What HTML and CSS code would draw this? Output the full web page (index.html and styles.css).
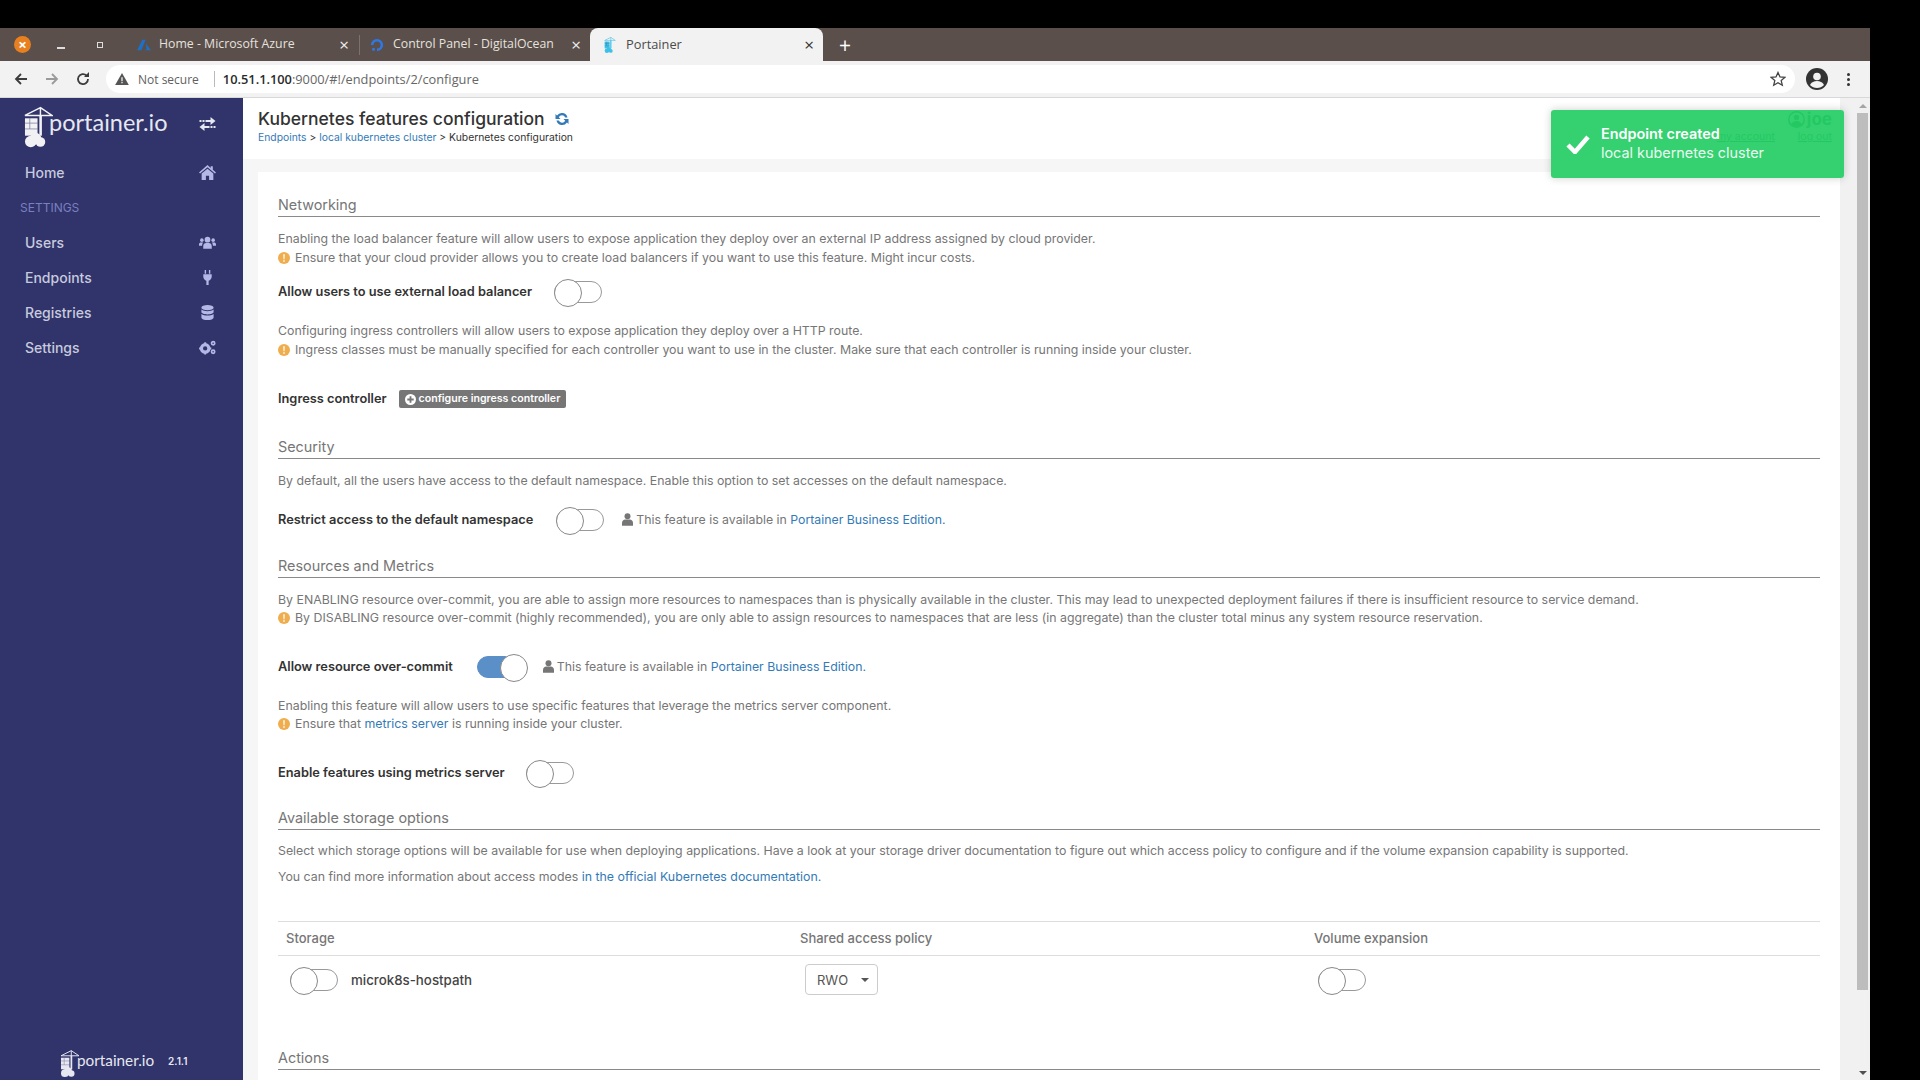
FILE: index.html
```html
<!DOCTYPE html>
<html lang="en">
<head>
<meta charset="utf-8">
<title>Portainer</title>
<link rel="stylesheet" href="styles.css">
</head>
<body>
<svg class="defs" width="0" height="0" aria-hidden="true">
  <defs>
    <symbol id="logo" viewBox="0 0 30 42">
      <path d="M17 1L1 9h28zM17 1v28" fill="none" stroke="currentColor" stroke-width="1.500"/>
      <path d="M16 9h2.500v21H16z" fill="currentColor"/>
      <path d="M1 12h13v18H1z" fill="currentColor"/>
      <path d="M1 17h13M1 23h13M6 12v11" stroke="#30346a" stroke-width=".8" opacity=".6"/>
      <circle cx="7" cy="36" r="6" fill="currentColor"/>
      <circle cx="12" cy="33" r="6" fill="currentColor"/>
      <circle cx="17" cy="36.500" r="5" fill="currentColor"/>
    </symbol>
    <symbol id="warn" viewBox="0 0 16 16">
      <circle cx="8" cy="8" r="8" fill="#f0ad4e"/>
      <path d="M7 3h2l-.3 6.500H7.300zM7 11h2v2H7z" fill="#fff"/>
    </symbol>
    <symbol id="user" viewBox="0 0 14 16">
      <circle cx="7" cy="4" r="3.800" fill="currentColor"/>
      <path d="M0 16v-3.500C0 9.500 2 8 4 8h6c2 0 4 1.500 4 4.500V16z" fill="currentColor"/>
    </symbol>
  </defs>
</svg>
<div class="window">
  <div class="tabbar">
    <span class="close-dot">×</span>
    <span class="win-min"></span>
    <span class="win-max"></span>
    <div class="tab tab-azure">
      <svg class="favicon" viewBox="0 0 16 16"><path d="M6 2h4L5 14H0zM10 6l6 8H7l4-1z" fill="#1f6fc4"/></svg>
      <span class="tab-title">Home - Microsoft Azure</span><span class="tab-x">×</span>
    </div>
    <span class="tab-sep"></span>
    <div class="tab tab-do">
      <svg class="favicon" viewBox="0 0 16 16"><path d="M8 15V12a4 4 0 1 0-4-4H1A7 7 0 1 1 8 15z" fill="#2f78e4"/><path d="M2.500 11.500h3v3h-3z" fill="#2f78e4"/></svg>
      <span class="tab-title">Control Panel - DigitalOcean</span><span class="tab-x">×</span>
    </div>
    <div class="tab tab-active">
      <svg class="favicon fav-logo"><use href="#logo"/></svg>
      <span class="tab-title">Portainer</span><span class="tab-x">×</span>
    </div>
    <span class="tab-new">+</span>
  </div>
  <div class="toolbar">
    <svg class="nav" viewBox="0 0 16 16"><path d="M14 8H3M8 3L3 8l5 5" fill="none" stroke="#3c3c3c" stroke-width="1.800"/></svg>
    <svg class="nav" viewBox="0 0 16 16"><path d="M2 8h11M8 3l5 5-5 5" fill="none" stroke="#9a9a9a" stroke-width="1.800"/></svg>
    <svg class="nav" viewBox="0 0 16 16"><path d="M13 8a5 5 0 1 1-1.500-3.500" fill="none" stroke="#3c3c3c" stroke-width="1.800"/><path d="M14 1v5H9z" fill="#3c3c3c"/></svg>
    <div class="omnibox">
      <svg class="warn-tri" viewBox="0 0 16 14"><path d="M8 0l8 14H0z" fill="#555"/><path d="M7.300 5h1.400v4.500H7.300zM7.300 10.500h1.400V12H7.300z" fill="#fff"/></svg>
      <span class="not-secure">Not secure</span>
      <span class="omni-sep"></span>
      <span class="url"><b>10.51.1.100</b>:9000/#!/endpoints/2/configure</span>
      <svg class="star" viewBox="0 0 16 16"><path d="M8 1.500l2 4.500 4.800.4-3.600 3.200 1.100 4.700L8 11.800l-4.300 2.500 1.100-4.700L1.200 6.400 6 6z" fill="none" stroke="#444" stroke-width="1.300"/></svg>
    </div>
    <svg class="avatar" viewBox="0 0 22 22"><circle cx="11" cy="11" r="11" fill="#333"/><circle cx="11" cy="8.500" r="3.800" fill="#f2f2f2"/><path d="M4 17c1.500-3 4-4 7-4s5.500 1 7 4c-1.800 2-4.300 3-7 3s-5.200-1-7-3z" fill="#f2f2f2"/></svg>
    <span class="kebab"><i></i><i></i><i></i></span>
  </div>
  <div class="app">
    <aside class="sidebar">
      <div class="brand">
        <svg class="brand-logo"><use href="#logo"/></svg>
        <span class="brand-name">portainer.io</span>
        <svg class="brand-swap" viewBox="0 0 16 14"><path d="M0 3h2v2H0zM3 3h2v2H3zM6 3h5V0l5 4-5 4V5H6zM16 9h-2v2h2zM13 9h-2v2h2zM10 9H5V6l-5 4 5 4v-3h5z" fill="currentColor"/></svg>
      </div>
      <nav class="menu">
        <a class="menu-item"><span>Home</span>
          <svg class="menu-icon" viewBox="0 0 16 14"><path d="M8 0L0 7l1 1 7-6 7 6 1-1-3-2.600V1h-2v1.700z" fill="currentColor"/><path d="M8 3.500L2.500 8v6H6.500v-4h3v4h4V8z" fill="currentColor"/></svg></a>
        <div class="menu-title">SETTINGS</div>
        <a class="menu-item"><span>Users</span>
          <svg class="menu-icon" viewBox="0 0 18 13"><circle cx="9" cy="3.500" r="3" fill="currentColor"/><circle cx="3" cy="4" r="1.900" fill="currentColor"/><circle cx="15" cy="4" r="1.900" fill="currentColor"/><path d="M4.500 13v-2.500C4.500 8 6 7 7.500 7h3c1.500 0 3 1 3 3.500V13zM0 10V8.500C0 7 1 6.500 2 6.500h2.500C3.500 7.500 3.300 8.800 3.300 10zM18 10V8.500C18 7 17 6.500 16 6.500h-2.500c1 1 1.200 2.300 1.200 3.500z" fill="currentColor"/></svg></a>
        <a class="menu-item"><span>Endpoints</span>
          <svg class="menu-icon" viewBox="0 0 16 16"><path d="M5 0h1.500v4H5zM9.500 0H11v4H9.500zM3.500 4.500h9V7c0 2.500-1.700 4-3.300 4.400V16H6.800v-4.600C5.200 11 3.500 9.500 3.500 7z" fill="currentColor"/></svg></a>
        <a class="menu-item"><span>Registries</span>
          <svg class="menu-icon" viewBox="0 0 14 16"><ellipse cx="7" cy="2.800" rx="6.500" ry="2.800" fill="currentColor"/><path d="M.5 4.800C2 6.200 4.500 6.600 7 6.600s5-.4 6.500-1.800v2.700C13.500 9 10.500 10 7 10S.5 9 .5 7.500zM.5 9.500C2 10.900 4.500 11.300 7 11.300s5-.4 6.500-1.800v3.700C13.500 14.800 10.500 16 7 16S.5 14.800.5 13.200z" fill="currentColor"/></svg></a>
        <a class="menu-item"><span>Settings</span>
          <svg class="menu-icon" viewBox="0 0 18 16"><circle cx="6.500" cy="9" r="4" fill="none" stroke="currentColor" stroke-width="3.400"/><path d="M5.500 2.500h2v2h-2zM5.500 13.500h2v2h-2zM0 8h2v2H0zM11 8h2v2h-2z" fill="currentColor"/><circle cx="15" cy="3.500" r="1.700" fill="none" stroke="currentColor" stroke-width="1.800"/><circle cx="15" cy="12.500" r="1.700" fill="none" stroke="currentColor" stroke-width="1.800"/></svg></a>
      </nav>
      <div class="sidebar-foot">
        <svg class="foot-logo"><use href="#logo"/></svg>
        <span class="foot-name">portainer.io</span>
        <span class="foot-ver">2.1.1</span>
      </div>
    </aside>
    <main class="main">
      <header class="page-header">
        <div>
          <h1 class="page-title">Kubernetes features configuration
            <svg class="refresh" viewBox="0 0 16 16"><path d="M13.500 6.500A5.800 5.800 0 0 0 3 4.500L1.500 3v5h5L4.800 6.300A3.500 3.500 0 0 1 11.200 6.500zM2.500 9.500A5.800 5.800 0 0 0 13 11.500l1.500 1.500V8h-5l1.700 1.700A3.500 3.500 0 0 1 4.800 9.500z" fill="#337ab7"/></svg>
          </h1>
          <div class="crumbs"><a>Endpoints</a> &gt; <a>local kubernetes cluster</a> &gt; Kubernetes configuration</div>
        </div>
        <div class="userbox">
          <div class="user-name"><svg class="user-ico" viewBox="0 0 22 22"><circle cx="11" cy="11" r="10" fill="none" stroke="currentColor" stroke-width="2"/><circle cx="11" cy="8.500" r="3.500" fill="currentColor"/><path d="M4 17c2-3 4-4 7-4s5 1 7 4c-2 2-4 3-7 3s-5-1-7-3z" fill="currentColor"/></svg> joe</div>
          <div class="user-links"><a>my account</a> <a>log out</a></div>
        </div>
      </header>
      <section class="card">
        <h2 class="sec sec-first">Networking</h2>
        <p class="txt">Enabling the load balancer feature will allow users to expose application they deploy over an external IP address assigned by cloud provider.</p>
        <p class="txt"><svg class="warn"><use href="#warn"/></svg>Ensure that your cloud provider allows you to create load balancers if you want to use this feature. Might incur costs.</p>
        <div class="row row-a"><label class="lbl">Allow users to use external load balancer</label><span class="switch"></span></div>
        <p class="txt txt-gap">Configuring ingress controllers will allow users to expose application they deploy over a HTTP route.</p>
        <p class="txt"><svg class="warn"><use href="#warn"/></svg>Ingress classes must be manually specified for each controller you want to use in the cluster. Make sure that each controller is running inside your cluster.</p>
        <div class="row row-b"><label class="lbl">Ingress controller</label>
          <span class="btn-mini"><svg class="plus" viewBox="0 0 12 12"><circle cx="6" cy="6" r="6" fill="#fff"/><path d="M5 2.500h2V5h2.500v2H7v2.500H5V7H2.500V5H5z" fill="#767676"/></svg>configure ingress controller</span></div>
        <h2 class="sec sec-security">Security</h2>
        <p class="txt">By default, all the users have access to the default namespace. Enable this option to set accesses on the default namespace.</p>
        <div class="row row-c"><label class="lbl">Restrict access to the default namespace</label><span class="switch"></span>
          <span class="be"><svg class="be-ico"><use href="#user"/></svg>This feature is available in <a>Portainer Business Edition.</a></span></div>
        <h2 class="sec sec-resources">Resources and Metrics</h2>
        <p class="txt">By ENABLING resource over-commit, you are able to assign more resources to namespaces than is physically available in the cluster. This may lead to unexpected deployment failures if there is insufficient resource to service demand.</p>
        <p class="txt"><svg class="warn"><use href="#warn"/></svg>By DISABLING resource over-commit (highly recommended), you are only able to assign resources to namespaces that are less (in aggregate) than the cluster total minus any system resource reservation.</p>
        <div class="row row-d"><label class="lbl">Allow resource over-commit</label><span class="switch on"></span>
          <span class="be"><svg class="be-ico"><use href="#user"/></svg>This feature is available in <a>Portainer Business Edition.</a></span></div>
        <p class="txt txt-gap2">Enabling this feature will allow users to use specific features that leverage the metrics server component.</p>
        <p class="txt"><svg class="warn"><use href="#warn"/></svg>Ensure that <a>metrics server</a> is running inside your cluster.</p>
        <div class="row row-e"><label class="lbl">Enable features using metrics server</label><span class="switch"></span></div>
        <h2 class="sec sec-storage">Available storage options</h2>
        <p class="txt txt-loose">Select which storage options will be available for use when deploying applications. Have a look at your storage driver documentation to figure out which access policy to configure and if the volume expansion capability is supported.</p>
        <p class="txt txt-loose">You can find more information about access modes <a>in the official Kubernetes documentation.</a></p>
        <div class="tbl">
          <div class="tbl-head"><span>Storage</span><span>Shared access policy</span><span>Volume expansion</span></div>
          <div class="tbl-row">
            <span class="tbl-cell"><span class="switch"></span><span class="store-name">microk8s-hostpath</span></span>
            <span class="tbl-cell"><span class="select">RWO<i class="caret"></i></span></span>
            <span class="tbl-cell"><span class="switch"></span></span>
          </div>
        </div>
        <h2 class="sec sec-actions">Actions</h2>
      </section>
    </main>
    <div class="scrollbar">
      <i class="sb-up"></i>
      <div class="sb-thumb"></div>
      <i class="sb-down"></i>
    </div>
    <div class="toast">
      <svg class="toast-check" viewBox="0 0 24 20"><path d="M2 11l7 7L22 3" fill="none" stroke="#fff" stroke-width="4.500"/></svg>
      <div class="toast-body"><div class="toast-title">Endpoint created</div><div>local kubernetes cluster</div></div>
    </div>
  </div>
</div>
</body>
</html>
```
FILE: styles.css
```css
* { box-sizing: border-box; }
html, body { margin: 0; height: 100%; background: #000; overflow: hidden; }
body { font-family: "Inter", "Open Sans", sans-serif; color: #333; }
.defs { position: absolute; }
.window { width: 1870px; height: 1052px; margin-top: 28px; display: flex; flex-direction: column; background: #fff; overflow: hidden; }

.tabbar { height: 33px; flex: none; background: #5a4f4b; display: flex; align-items: center; color: #eee; font: 12.300px "Open Sans", sans-serif; }
.close-dot { width: 17px; height: 17px; margin-left: 14px; border-radius: 50%; background: #e8801f; color: #fff; font: 700 15px/16px "Open Sans", sans-serif; text-align: center; flex: none; }
.win-min { width: 8px; height: 2px; background: #ddd; margin: 6px 0 0 26px; flex: none; }
.win-max { width: 6px; height: 6px; border: 1.500px solid #ddd; margin-left: 32px; flex: none; }
.tab { display: flex; align-items: center; height: 33px; flex: none; }
.favicon { width: 14px; height: 16px; flex: none; }
.tab-title { white-space: nowrap; color: #e6e2df; margin-top: -2px; }
.tab-x { font-size: 17px; line-height: 17px; color: #eee; margin-left: auto; margin-top: -1px; }
.tab-azure { width: 212px; margin-left: 34px; }
.tab-azure .tab-title { margin-left: 8px; }
.tab-sep { width: 1px; height: 20px; background: #7c726d; margin: 0 10px; flex: none; }
.tab-do { width: 211px; }
.tab-do .tab-title { margin-left: 9px; }
.tab-active { width: 233px; margin-left: 9px; background: #f2f2f2; border-radius: 8px 8px 0 0; padding: 0 9px 0 13px; }
.tab-active .tab-title { color: #4a4a4a; margin-left: 9px; font-size: 12.800px; }
.tab-active .tab-x { color: #333; }
.fav-logo { color: #3ec0e8; }
.tab-new { font-size: 21px; color: #fff; margin-left: 16px; line-height: 20px; }

.toolbar { height: 37px; flex: none; background: #f2f2f2; border-bottom: 1px solid #d8d8d8; display: flex; align-items: center; padding-left: 13px; }
.nav { width: 16px; height: 16px; margin-right: 15px; flex: none; }
.omnibox { flex: 1; height: 28px; background: #fff; border-radius: 14px; display: flex; align-items: center; padding: 0 9px; font: 12.800px "Open Sans", sans-serif; }
.warn-tri { width: 14px; height: 12px; margin-right: 9px; }
.not-secure { color: #5f5f5f; font-size: 12px; }
.omni-sep { width: 1px; height: 16px; background: #bbb; margin: 0 8px 0 15px; }
.url { color: #666; }
.url b { font-weight: 600; color: #2a2a2a; }
.star { width: 16px; height: 16px; margin-left: auto; }
.avatar { width: 22px; height: 22px; margin: 0 19px 0 11px; flex: none; }
.kebab { display: flex; flex-direction: column; gap: 2px; margin-right: 20px; }
.kebab i { width: 3px; height: 3px; border-radius: 50%; background: #333; }

.app { flex: 1; min-height: 0; display: flex; position: relative; }
.sidebar { width: 243px; flex: none; background: #30346a; display: flex; flex-direction: column; color: #b9bdde; }
.brand { height: 52px; display: flex; align-items: center; padding-left: 24px; color: #fff; }
.brand-logo { width: 29px; height: 42px; margin-top: 6px; color: #f2f2f5; flex: none; margin-right: -4px; }
.brand-name { font: 400 23.500px "Lato", sans-serif; margin-top: -4px; color: #e6e7f0; }
.brand-swap { width: 17px; height: 14px; margin-left: auto; margin-right: 27px; color: #e6e7f0; }
.menu { margin-top: 5px; }
.menu-item { display: flex; align-items: center; justify-content: space-between; height: 35px; padding: 0 27px 0 25px; font: 500 14px "Inter", sans-serif; color: #c8cade; }
.menu-icon { width: 17px; height: 15px; color: #b3b8e6; }
.menu-title { font: 400 12px/35px "Inter", sans-serif; color: #7a7fc0; padding-left: 20px; height: 35px; }
.sidebar-foot { margin-top: auto; height: 38px; display: flex; align-items: center; padding-left: 60px; color: #e6e7f0; }
.foot-logo { width: 20px; height: 27px; margin-top: 4px; flex: none; margin-right: -3px; }
.foot-name { font: 400 15.300px "Lato", sans-serif; margin-top: -2px; }
.foot-ver { font: 600 10px "Inter", sans-serif; margin-left: 14px; }

.main { flex: 1; min-width: 0; background: #f6f6f6; overflow: hidden; }
.page-header { height: 61px; background: #fff; padding: 10px 8px 0 15px; display: flex; justify-content: space-between; }
.page-title { margin: 0; font: 500 17.500px/22px "Inter", sans-serif; color: #333; display: flex; align-items: center; gap: 9px; }
.refresh { width: 16px; height: 16px; }
.crumbs { font: 400 10.350px/14px "Inter", sans-serif; color: #333; }
.crumbs a, .txt a, .be a { color: #337ab7; }
.userbox { text-align: right; color: #189a4b; padding-top: 1px; }
.user-name { font: 700 17px/20px "Inter", sans-serif; display: flex; align-items: center; gap: 2px; justify-content: flex-end; }
.user-ico { width: 17px; height: 17px; }
.user-links { font: 400 10.500px/14px "Inter", sans-serif; margin-top: 1px; }
.user-links a { text-decoration: underline; margin-left: 20px; }

.card { margin: 13px 0 0 15px; background: #fff; padding: 0 20px; height: 920px; }
.sec { margin: 0; font: 400 14.400px/18px "Inter", sans-serif; color: #767676; border-bottom: 1px solid #8a8a8a; padding-bottom: 2px; }
.sec-first { padding-top: 24px; }
.sec-security { margin-top: 29px; }
.sec-resources { margin-top: 23px; }
.sec-storage { margin-top: 22px; }
.sec-actions { margin-top: 45px; }
.txt { margin: 0; font: 400 12.350px/18.500px "Inter", sans-serif; color: #767676; display: flex; align-items: center; white-space: pre; }
.sec + .txt { margin-top: 13px; }
.warn { width: 12px; height: 12px; margin-right: 5px; flex: none; }
.row { display: flex; align-items: center; }
.lbl { font: 600 12.800px/18px "Inter", sans-serif; color: #333; }
.switch { width: 48px; height: 22px; margin-left: 22px; border: 1px solid #999; border-radius: 12px; background: #fff; position: relative; display: inline-block; flex: none; }
.switch::before { content: ""; position: absolute; left: -1px; top: -3px; width: 26px; height: 26px; border-radius: 50%; background: #fff; border: 1px solid #888; }
.switch.on { background: #5a8fc8; border-color: #5a8fc8; }
.switch.on::before { left: 22px; }
.row-a { margin-top: 12px; height: 26px; }
.txt-gap { margin-top: 17px; }
.txt-gap2 { margin-top: 16px; }
.row-b { margin-top: 30px; height: 20px; }
.btn-mini { margin-left: 12px; height: 18px; background: #767676; color: #fff; border-radius: 2px; font: 600 10.600px/18px "Inter", sans-serif; padding: 0 6px; display: flex; align-items: center; gap: 3px; }
.plus { width: 11px; height: 11px; }
.row-c { margin-top: 15px; height: 28px; }
.row-c .switch { margin-left: 23px; }
.row-d { margin-top: 25px; height: 28px; }
.row-d .switch { margin-left: 24px; }
.be { margin-left: 18px; font: 400 12.300px/18px "Inter", sans-serif; color: #767676; display: flex; align-items: center; white-space: pre; }
.be-ico { width: 11px; height: 13px; margin-right: 3px; color: #767676; }
.row-e { margin-top: 25px; height: 28px; }
.row-e .switch { margin-left: 21px; }
.sec + .txt-loose { margin-top: 8px; }
.txt-loose { line-height: 26px; }
.tbl { margin-top: 31px; border-top: 1px solid #ddd; }
.tbl-head { display: grid; grid-template-columns: 1fr 1fr 1fr; height: 34px; align-items: center; border-bottom: 1px solid #ddd; font: 500 13px "Inter", sans-serif; color: #767676; }
.tbl-head span { padding-left: 8px; }
.tbl-row { display: grid; grid-template-columns: 1fr 1fr 1fr; height: 48px; align-items: center; font: 500 13.300px "Inter", sans-serif; color: #444; }
.tbl-cell { display: flex; align-items: center; padding-left: 8px; }
.tbl-cell .switch { margin-left: 4px; }
.store-name { margin-left: 13px; }
.select { width: 73px; height: 31px; border: 1px solid #ccc; border-radius: 4px; display: flex; align-items: center; justify-content: space-between; padding: 0 8px 0 11px; font: 400 13px "Inter", sans-serif; color: #555; margin-left: 5px; }
.caret { border: 4px solid transparent; border-top-color: #555; border-bottom: 0; }

.toast { position: absolute; left: 1551px; top: 12px; width: 293px; height: 68px; background: rgba(36, 204, 100, .92); border-radius: 3px; box-shadow: 0 0 8px rgba(0,0,0,.2); color: #e9fbf0; display: flex; align-items: center; font: 400 14.400px/19px "Inter", sans-serif; }
.toast-check { width: 24px; height: 20px; margin-left: 15px; flex: none; }
.toast-body { margin: -3px 0 0 11px; }
.toast-title { font-weight: 600; color: #fff; }

.scrollbar { width: 30px; flex: none; background: #f1f1f1; display: flex; flex-direction: column; align-items: center; padding-left: 17px; padding-right: 2px; }
.sb-up { border: 4px solid transparent; border-bottom-color: #a5a5a5; border-top: 0; margin: 6px 0 5px; }
.sb-thumb { width: 11px; height: 877px; background: #bdbdbd; flex: none; }
.sb-down { border: 4px solid transparent; border-top-color: #505050; border-bottom: 0; margin-top: auto; margin-bottom: 5px; }
```
